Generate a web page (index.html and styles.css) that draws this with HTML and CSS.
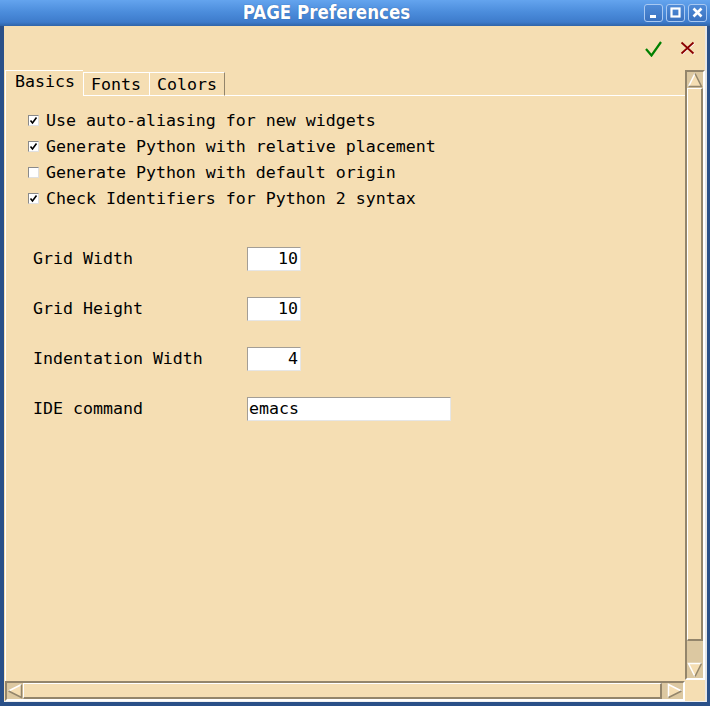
FILE: index.html
```html
<!DOCTYPE html>
<html>
<head>
<meta charset="utf-8">
<title>PAGE Preferences</title>
<link rel="stylesheet" href="styles.css">
</head>
<body>
<div class="window">
  <div class="titlebar">
    <div class="title">PAGE Preferences</div>
    <div class="tbtns">
      <span class="tbtn"><svg width="17" height="16" viewBox="0 0 17 16"><rect x="5" y="10" width="6" height="3" fill="#fff"/></svg></span>
      <span class="tbtn"><svg width="17" height="16" viewBox="0 0 17 16"><rect x="4.5" y="3.5" width="8" height="8" fill="none" stroke="#fff" stroke-width="2.2"/></svg></span>
      <span class="tbtn"><svg width="17" height="16" viewBox="0 0 17 16"><path d="M4.5 3.5 L12.5 11.5 M12.5 3.5 L4.5 11.5" stroke="#fff" stroke-width="2.6"/></svg></span>
    </div>
  </div>
  <div class="frame">
    <div class="toolbar">
      <svg class="ok" width="17" height="16" viewBox="0 0 17 16"><path d="M1 8 L6.5 14.5 L16 1" fill="none" stroke="#008000" stroke-width="2.2"/></svg>
      <svg class="cancel" width="15" height="14" viewBox="0 0 15 14"><path d="M1.5 1.5 L13.5 12.5 M13.5 1.5 L1.5 12.5" stroke="#fff" stroke-width="1.4" transform="translate(0.8,0.8)"/><path d="M1.5 1.5 L13.5 12.5 M13.5 1.5 L1.5 12.5" stroke="#8b0000" stroke-width="1.8"/></svg>
    </div>
    <div class="main">
      <div class="notebook">
        <div class="tabs">
          <div class="tab sel">Basics</div>
          <div class="tab">Fonts</div>
          <div class="tab last">Colors</div>
          <div class="tabfill"></div>
        </div>
        <div class="page">
          <div class="checks">
            <label class="chk"><span class="box on"><svg width="9" height="9" viewBox="0 0 9 9"><path d="M1.5 4.5 L3.5 7 L7.5 1.5" fill="none" stroke="#000" stroke-width="1.6"/></svg></span>Use auto-aliasing for new widgets</label>
            <label class="chk"><span class="box on"><svg width="9" height="9" viewBox="0 0 9 9"><path d="M1.5 4.5 L3.5 7 L7.5 1.5" fill="none" stroke="#000" stroke-width="1.6"/></svg></span>Generate Python with relative placement</label>
            <label class="chk"><span class="box"></span>Generate Python with default origin</label>
            <label class="chk"><span class="box on"><svg width="9" height="9" viewBox="0 0 9 9"><path d="M1.5 4.5 L3.5 7 L7.5 1.5" fill="none" stroke="#000" stroke-width="1.6"/></svg></span>Check Identifiers for Python 2 syntax</label>
          </div>
          <div class="fields">
            <div class="field"><span class="lbl">Grid Width</span><span class="entry num">10</span></div>
            <div class="field"><span class="lbl">Grid Height</span><span class="entry num">10</span></div>
            <div class="field"><span class="lbl">Indentation Width</span><span class="entry num">4</span></div>
            <div class="field"><span class="lbl">IDE command</span><span class="entry wide">emacs</span></div>
          </div>
        </div>
      </div>
      <div class="vscroll">
        <div class="arrow"><svg width="16" height="16" viewBox="0 0 16 16"><polygon points="8,1.5 14.5,14.5 1.5,14.5" fill="#f5deb3"/><path d="M1.5 14.5 L8 1.5" stroke="#fff" stroke-width="1.5"/><path d="M8 1.5 L14.5 14.5 L1.5 14.5" fill="none" stroke="#93856b" stroke-width="1.5"/></svg></div>
        <div class="vslider"></div>
        <div class="trough"></div>
        <div class="arrow"><svg width="16" height="16" viewBox="0 0 16 16"><polygon points="1.5,1.5 14.5,1.5 8,14.5" fill="#f5deb3"/><path d="M14.5 1.5 L1.5 1.5 L8 14.5" fill="none" stroke="#fff" stroke-width="1.5"/><path d="M14.5 1.5 L8 14.5" stroke="#93856b" stroke-width="1.5"/></svg></div>
      </div>
    </div>
    <div class="bottom">
      <div class="hscroll">
        <div class="arrow"><svg width="16" height="16" viewBox="0 0 16 16"><polygon points="1.5,8 14.5,1.5 14.5,14.5" fill="#f5deb3"/><path d="M1.5 8 L14.5 1.5" stroke="#fff" stroke-width="1.5"/><path d="M14.5 1.5 L14.5 14.5 L1.5 8" fill="none" stroke="#93856b" stroke-width="1.5"/></svg></div>
        <div class="hslider"></div>
        <div class="trough"></div>
        <div class="arrow"><svg width="16" height="16" viewBox="0 0 16 16"><polygon points="1.5,1.5 14.5,8 1.5,14.5" fill="#f5deb3"/><path d="M1.5 14.5 L1.5 1.5 L14.5 8" fill="none" stroke="#fff" stroke-width="1.5"/><path d="M14.5 8 L1.5 14.5" stroke="#93856b" stroke-width="1.5"/></svg></div>
      </div>
      <div class="corner"></div>
    </div>
  </div>
</div>
</body>
</html>
```
FILE: styles.css
```css
* { box-sizing: border-box; }
html, body { margin: 0; padding: 0; }
body {
  width: 710px;
  height: 706px;
  overflow: hidden;
  font-family: "DejaVu Sans Mono", "Liberation Mono", monospace;
  font-size: 16.6px;
  color: #000;
}
.window {
  width: 710px;
  height: 706px;
  display: flex;
  flex-direction: column;
  background: #2a5088;
}
.titlebar {
  height: 26px;
  flex: none;
  display: flex;
  align-items: center;
  background: linear-gradient(#64a4ee, #4c8ddc 45%, #3d7bcb 85%, #2f64a8);
  padding: 0 3px 0 4px;
}
.title {
  flex: 1;
  text-align: center;
  color: #fff;
  font-family: "DejaVu Sans Condensed", "DejaVu Sans", sans-serif;
  font-weight: bold;
  font-size: 18.6px;
  line-height: 26px;
  text-shadow: 0 0 1px #24508c;
  padding-left: 5px;
}
.tbtns { display: flex; gap: 3px; }
.tbtn {
  width: 19px;
  height: 18px;
  border: 1px solid #a9c9f2;
  border-radius: 3px;
  background: linear-gradient(#4f8bd8, #3a72c0);
  display: flex;
}
.frame {
  flex: 1;
  margin: 0 3px 4px 4px;
  background: #f5deb3;
  border-right: 2px solid #e6e6e6;
  border-bottom: 1px solid #f0f0f0;
  display: flex;
  flex-direction: column;
}
.toolbar {
  height: 44px;
  flex: none;
  display: flex;
  align-items: flex-start;
  justify-content: flex-end;
  padding: 15px 10px 0 0;
}
.toolbar .ok { margin-right: 18px; }
.main {
  flex: none;
  height: 611px;
  display: flex;
}
.notebook {
  flex: 1;
  margin-left: 1px;
  display: flex;
  flex-direction: column;
}
.tabs {
  height: 26px;
  display: flex;
  align-items: flex-end;
}
.tab {
  height: 24px;
  border-top: 1px solid #fff;
  border-left: 1px solid #fff;
  border-bottom: 1px solid #fff;
  padding: 1px 0 0 7px;
  line-height: 21px;
}
.tab:nth-child(1) { width: 78px; }
.tab:nth-child(2) { width: 66px; }
.tab:nth-child(3) { width: 76px; border-right: 1px solid #93856b; }
.tab.sel {
  height: 26px;
  border-bottom: none;
  padding: 0 0 0 9px;
  line-height: 22px;
}
.tabfill {
  flex: 1;
  border-bottom: 1px solid #fff;
}
.page {
  flex: 1;
  border-left: 1px solid #fff;
  padding: 11px 0 0 22px;
}
.checks { display: flex; flex-direction: column; }
.chk {
  height: 26px;
  display: flex;
  align-items: center;
  white-space: pre;
}
.box {
  width: 11px;
  height: 11px;
  margin-right: 7px;
  background: #fff;
  border-top: 1px solid #8a8a8a;
  border-left: 1px solid #8a8a8a;
  border-bottom: 1px solid #e0e0e0;
  border-right: 1px solid #e0e0e0;
  display: flex;
  align-items: center;
  justify-content: center;
}
.fields {
  margin-top: 36px;
  padding-left: 5px;
  display: flex;
  flex-direction: column;
  gap: 26px;
}
.field {
  height: 24px;
  display: flex;
  align-items: center;
}
.lbl { width: 214px; white-space: pre; padding-bottom: 2px; }
.entry {
  height: 24px;
  background: #fff;
  border-top: 1px solid #a39e96;
  border-left: 1px solid #a39e96;
  border-bottom: 1px solid #e6e6e6;
  border-right: 1px solid #e6e6e6;
  line-height: 22px;
}
.entry.num { width: 54px; text-align: right; padding-right: 2px; }
.entry.wide { width: 204px; padding-left: 1px; }
.vscroll {
  width: 20px;
  height: 610px;
  border-top: 2px solid #93856b;
  border-left: 2px solid #93856b;
  border-bottom: 2px solid #fff;
  border-right: 2px solid #fff;
  background: #dcc8a1;
  display: flex;
  flex-direction: column;
}
.arrow { width: 16px; height: 16px; flex: none; display: flex; }
.trough { flex: 1; }
.vslider {
  height: 553px;
  flex: none;
  background: #f5deb3;
  border-top: 1px solid #fff;
  border-left: 1px solid #fff;
  border-bottom: 2px solid #93856b;
  border-right: 2px solid #93856b;
}
.bottom {
  height: 20px;
  flex: none;
  display: flex;
}
.hscroll {
  margin-left: 1px;
  width: 680px;
  height: 20px;
  border-top: 2px solid #93856b;
  border-left: 2px solid #93856b;
  border-bottom: 2px solid #fff;
  border-right: 2px solid #fff;
  background: #dcc8a1;
  display: flex;
}
.hslider {
  width: 639px;
  flex: none;
  background: #f5deb3;
  border-top: 1px solid #fff;
  border-left: 1px solid #fff;
  border-bottom: 2px solid #93856b;
  border-right: 2px solid #93856b;
}
.corner { flex: 1; background: #f5deb3; }
```
